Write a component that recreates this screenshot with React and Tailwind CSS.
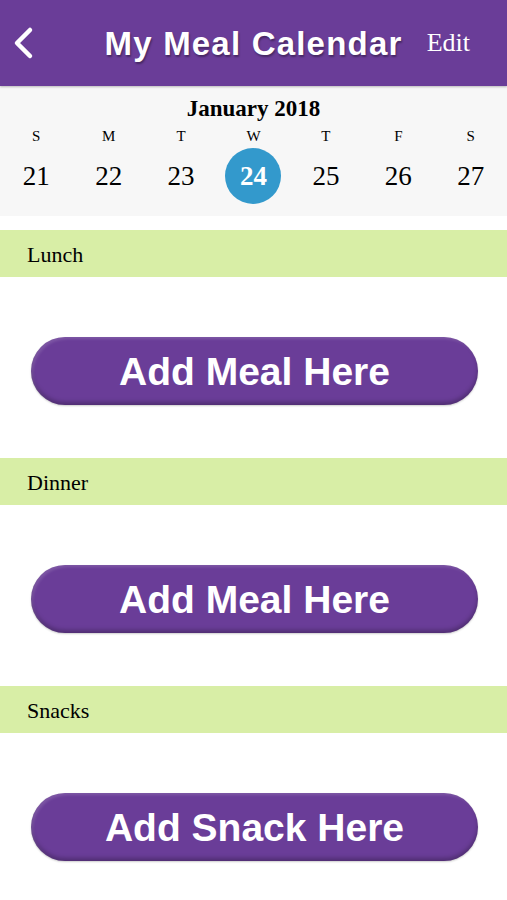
import React from "react";

const days = [
  { letter: "S", num: 21 },
  { letter: "M", num: 22 },
  { letter: "T", num: 23 },
  { letter: "W", num: 24, active: true },
  { letter: "T", num: 25 },
  { letter: "F", num: 26 },
  { letter: "S", num: 27 },
];

const sections = [
  { title: "Lunch", label: "Add Meal Here" },
  { title: "Dinner", label: "Add Meal Here" },
  { title: "Snacks", label: "Add Snack Here" },
];

const serif = "font-['Liberation_Serif','Times_New_Roman',serif]";
const sans = "font-['Liberation_Sans',Arial,sans-serif]";

const App = () => {
  return (
    <div className="w-[507px] h-[900px] bg-white overflow-hidden">
      {/* Header */}
      <div className="h-[86px] bg-[#6a3d98] grid grid-cols-[1fr_auto_1fr] items-center shadow-[0_1px_2px_rgba(0,0,0,0.25)] relative z-10">
        <div className="pl-[12px] flex items-center">
          <svg width="24" height="34" viewBox="0 0 24 34" fill="none">
            <path d="M18 4 L5 17 L18 30" stroke="white" strokeWidth="4.5" strokeLinecap="round" strokeLinejoin="round" />
          </svg>
        </div>
        <h1 className={`${sans} text-white font-bold text-[33px] tracking-[1.2px] leading-none [text-shadow:1px_2px_2px_rgba(0,0,0,0.35)]`}>
          My Meal Calendar
        </h1>
        <div className="flex justify-end pr-[37px]">
          <span className={`${serif} text-white text-[26px] leading-none`}>Edit</span>
        </div>
      </div>

      {/* Calendar strip */}
      <div className="bg-[#f7f7f7] pt-[10px] pb-[12px]">
        <div className={`${serif} text-center font-bold text-[23px] leading-[26px] text-black`}>
          January 2018
        </div>
        <div className="grid grid-cols-7 mt-[5px]">
          {days.map((d, i) => (
            <div key={i} className={`${serif} text-center text-[15px] leading-[18px] text-black`}>
              {d.letter}
            </div>
          ))}
        </div>
        <div className="grid grid-cols-7 mt-[3px]">
          {days.map((d) => (
            <div key={d.num} className="flex justify-center">
              {d.active ? (
                <div className={`${serif} w-[56px] h-[56px] rounded-full bg-[#3399cc] text-white font-bold text-[27px] flex items-center justify-center`}>
                  {d.num}
                </div>
              ) : (
                <div className={`${serif} h-[56px] flex items-center text-[27px] text-black`}>
                  {d.num}
                </div>
              )}
            </div>
          ))}
        </div>
      </div>

      {/* Meal sections */}
      <div className="pt-[14px]">
        {sections.map((s) => (
          <div key={s.title}>
            <div className="h-[47px] bg-[#d8eea6] flex items-center pl-[27px] pt-[3px]">
              <span className={`${serif} text-[22px] text-black leading-none`}>{s.title}</span>
            </div>
            <div className="pt-[60px] pb-[53px] pl-[31px] pr-[29px]">
              <button className={`${sans} w-full h-[68px] rounded-full bg-[#6a3d98] text-white font-bold text-[39px] leading-none shadow-[inset_0_-3px_4px_rgba(0,0,0,0.25),inset_2px_2px_3px_rgba(255,255,255,0.15),0_1px_2px_rgba(0,0,0,0.2)]`}>
                {s.label}
              </button>
            </div>
          </div>
        ))}
      </div>
    </div>
  );
};

export default App;
